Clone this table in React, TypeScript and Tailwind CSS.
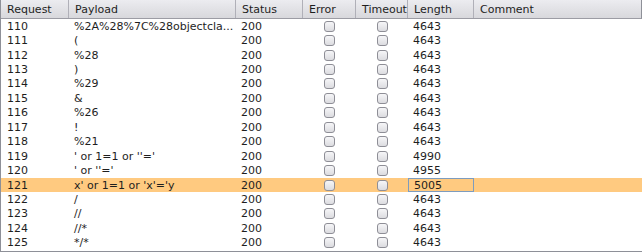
import React from 'react';

const columns = [
  { key: 'req', label: 'Request' },
  { key: 'payload', label: 'Payload' },
  { key: 'status', label: 'Status' },
  { key: 'error', label: 'Error' },
  { key: 'timeout', label: 'Timeout' },
  { key: 'length', label: 'Length' },
  { key: 'comment', label: 'Comment' },
];

const rows = [
  { id: 110, payload: '%2A%28%7C%28objectcla...', length: 4643 },
  { id: 111, payload: '(', length: 4643 },
  { id: 112, payload: '%28', length: 4643 },
  { id: 113, payload: ')', length: 4643 },
  { id: 114, payload: '%29', length: 4643 },
  { id: 115, payload: '&', length: 4643 },
  { id: 116, payload: '%26', length: 4643 },
  { id: 117, payload: '!', length: 4643 },
  { id: 118, payload: '%21', length: 4643 },
  { id: 119, payload: "' or 1=1 or ''='", length: 4990 },
  { id: 120, payload: "' or ''='", length: 4955 },
  { id: 121, payload: "x' or 1=1 or 'x'='y", length: 5005 },
  { id: 122, payload: '/', length: 4643 },
  { id: 123, payload: '//', length: 4643 },
  { id: 124, payload: '//*', length: 4643 },
  { id: 125, payload: '*/*', length: 4643 },
];

const grid = 'grid grid-cols-[68px_167px_67px_53px_52px_66px_1fr]';

function Check() {
  return (
    <div className="flex items-center justify-center h-full">
      <div className="w-[11px] h-[11px] rounded-[3px] border border-[#8e8e96] bg-gradient-to-b from-[#f6f6f8] to-[#dcdce0]" />
    </div>
  );
}

export default function App() {
  return (
    <div
      className="w-[642px] h-[252px] bg-white overflow-hidden border-l border-b border-[#8e9098] text-[11px] text-[#1e1e1e] leading-none"
      style={{ fontFamily: '"DejaVu Sans", Verdana, sans-serif' }}
    >
      {/* header */}
      <div className={`${grid} h-[19px] bg-gradient-to-b from-[#ececf0] to-[#d8d8dc] border-b border-[#9c9ca4] border-r border-r-[#8e9098]`}>
        {columns.map((c, i) => (
          <div
            key={c.key}
            className={`flex items-center pl-[6px] ${i < columns.length - 1 ? 'border-r border-[#b0b0b8]' : ''}`}
          >
            {c.label}
          </div>
        ))}
      </div>

      {/* body */}
      {rows.map(r => {
        const sel = r.id === 121;
        return (
          <div key={r.id} className={`${grid} h-[14.44px] ${sel ? 'bg-[#ffca80]' : ''}`}>
            <div className="flex items-center pl-[6px]">{r.id}</div>
            <div className="flex items-center pl-[5px] whitespace-nowrap overflow-hidden">{r.payload}</div>
            <div className="flex items-center pl-[5px]">200</div>
            <Check />
            <Check />
            <div className={`flex items-center pl-[5px] ${sel ? 'border border-[#7e9cbe]' : ''}`}>{r.length}</div>
            <div />
          </div>
        );
      })}
    </div>
  );
}
